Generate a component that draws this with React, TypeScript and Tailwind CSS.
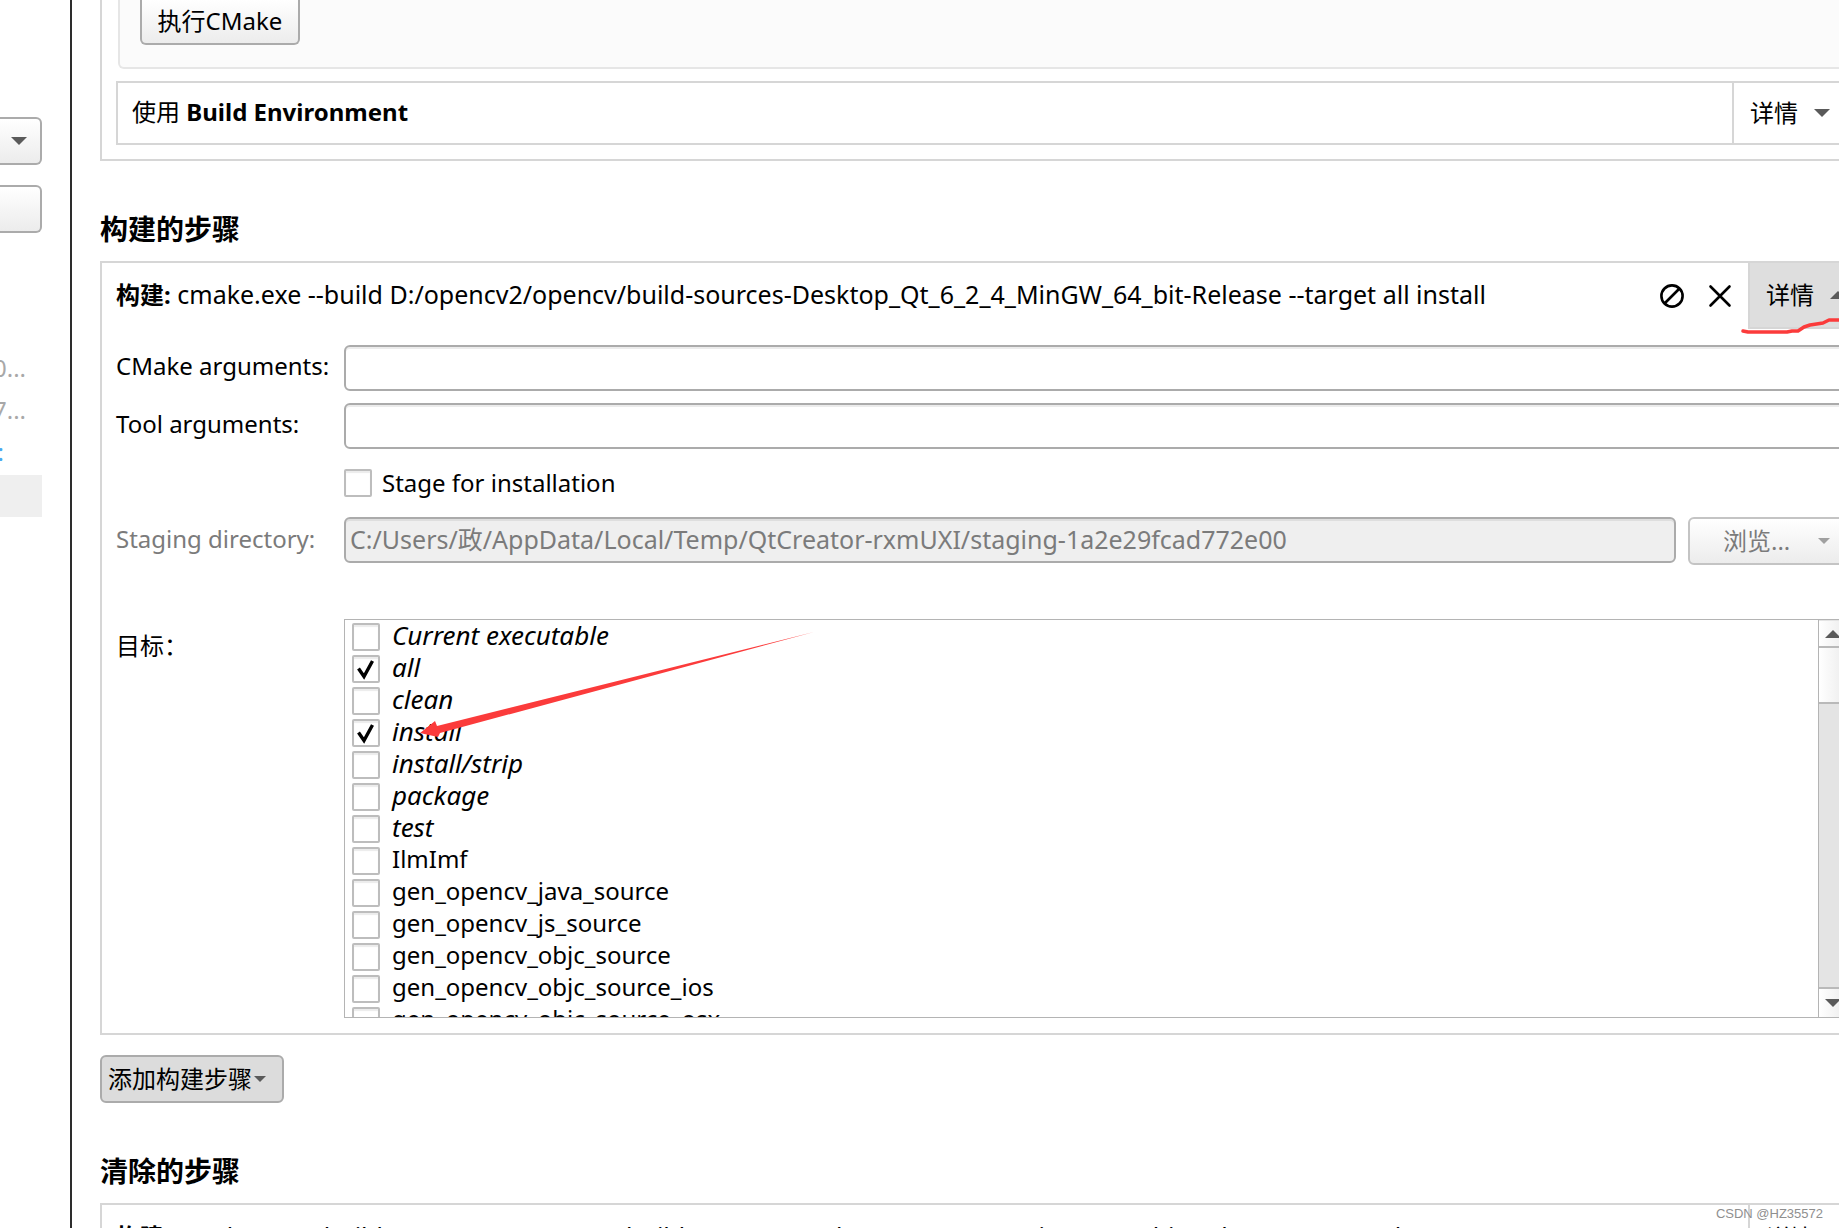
import React, { useState } from 'react';

const COMMAND = 'cmake.exe --build D:/opencv2/opencv/build-sources-Desktop_Qt_6_2_4_MinGW_64_bit-Release --target';

const targets = [
  { name: 'Current executable', special: true },
  { name: 'all', special: true },
  { name: 'clean', special: true },
  { name: 'install', special: true },
  { name: 'install/strip', special: true },
  { name: 'package', special: true },
  { name: 'test', special: true },
  { name: 'IlmImf', special: false },
  { name: 'gen_opencv_java_source', special: false },
  { name: 'gen_opencv_js_source', special: false },
  { name: 'gen_opencv_objc_source', special: false },
  { name: 'gen_opencv_objc_source_ios', special: false },
  { name: 'gen_opencv_objc_source_osx', special: false },
];

function Triangle({ className, up }: { className: string; up?: boolean }) {
  return (
    <svg viewBox="0 0 16 8" className={className} fill="currentColor" preserveAspectRatio="none" aria-hidden="true">
      <path d={up ? 'M0 8L8 0L16 8Z' : 'M0 0H16L8 8Z'} />
    </svg>
  );
}

function CheckBox({ id, checked, onChange }: { id: string; checked: boolean; onChange: () => void }) {
  return (
    <span className="grid size-7 shrink-0">
      <input
        id={id}
        type="checkbox"
        checked={checked}
        onChange={onChange}
        className="col-start-1 row-start-1 size-7 appearance-none rounded-xs border-2 border-[#bdbdbd] bg-white shadow-[inset_0_2px_1px_#ececec]"
      />
      {checked && (
        <svg viewBox="0 0 28 28" className="pointer-events-none col-start-1 row-start-1 size-7" fill="none" stroke="#000" strokeWidth="3.4" aria-hidden="true">
          <path d="M6.5 13.5L12 21.5L20.5 6" />
        </svg>
      )}
    </span>
  );
}

function Heading({ children }: { children: React.ReactNode }) {
  return <h2 className="pt-12 pb-3 text-[28px] leading-10 font-bold">{children}</h2>;
}

function DetailsButton({ open }: { open?: boolean }) {
  return (
    <button
      type="button"
      className={
        open
          ? 'flex w-[113px] shrink-0 items-center gap-4 border-b-2 border-l-2 border-[#d6d6d6] bg-[#dedede] pl-4'
          : 'flex w-[113px] shrink-0 items-center gap-4 border-l-2 border-[#d6d6d6] pl-4'
      }
    >
      详情
      <Triangle up={open} className="h-2 w-4 text-[#5a5a5a]" />
    </button>
  );
}

function Sidebar() {
  return (
    <aside className="w-[72px] shrink-0 overflow-hidden border-r-2 border-[#2d2d2d] pt-[117px] pr-7">
      <div className="grid items-center">
        <select
          aria-label="Kit"
          className="col-start-1 row-start-1 h-12 w-full appearance-none rounded-r-md border-2 border-l-0 border-[#ababab] bg-linear-to-b from-white to-[#ececec]"
        />
        <Triangle className="pointer-events-none col-start-1 row-start-1 mr-[15px] h-2 w-4 justify-self-end text-[#5a5a5a]" />
      </div>
      <button
        type="button"
        aria-label="Manage"
        className="mt-5 block h-12 w-full rounded-r-md border-2 border-l-0 border-[#ababab] bg-linear-to-b from-white to-[#ececec]"
      />
      <ul className="mt-[116px] leading-[38px] text-[#a8a8a8]">
        <li className="flex h-[42px] justify-end pr-4">0...</li>
        <li className="flex h-[42px] justify-end pr-4">7...</li>
        <li className="flex h-[42px] justify-end pr-[38px] text-[#4aa8f0]">:</li>
        <li className="h-[42px] bg-[#efefef]" />
      </ul>
    </aside>
  );
}

function ScrollBar() {
  return (
    <div className="flex w-7 shrink-0 flex-col border-l border-[#b4b4b4] bg-[#e4e4e4] pt-px">
      <button type="button" aria-label="Scroll up" className="flex h-[27px] items-center justify-center border-b-2 border-[#b9b9b9] bg-linear-to-r from-white to-[#ececec]">
        <Triangle up className="h-2 w-4 text-[#5a5a5a]" />
      </button>
      <div className="h-14 border-b-2 border-[#b9b9b9] bg-linear-to-r from-white to-[#ececec]" />
      <div className="flex-1" />
      <button type="button" aria-label="Scroll down" className="flex h-[30px] items-center justify-center border-t-2 border-[#b9b9b9] bg-linear-to-r from-white to-[#ececec]">
        <Triangle className="h-2 w-4 text-[#5a5a5a]" />
      </button>
    </div>
  );
}

function App() {
  const [selected, setSelected] = useState<string[]>(['all', 'install']);
  const [stage, setStage] = useState(false);

  const toggle = (name: string) => {
    setSelected(selected.includes(name) ? selected.filter((s) => s !== name) : [...selected, name]);
  };

  return (
    <div className="relative flex h-screen overflow-hidden bg-white font-['Noto_Sans','Noto_Sans_CJK_SC',sans-serif] text-[24px] leading-8 text-black">
      <Sidebar />

      <main className="-mr-6 min-w-0 flex-1 pl-7">
        {/* cmake configuration */}
        <section className="border-2 border-t-0 border-[#d6d6d6] px-3.5 pb-3.5">
          <div className="ml-0.5 rounded-b-md border-2 border-t-0 border-[#e6e6e6] bg-[#fbfbfb] pb-[22px] pl-5">
            <button type="button" className="block h-[45px] w-40 rounded-b-md border-2 border-t-0 border-[#ababab] bg-linear-to-b from-white to-[#ececec] pb-0.5">
              执行CMake
            </button>
          </div>
          <div className="mt-3 flex h-16 border-2 border-[#d6d6d6]">
            <p className="flex-1 self-center pb-0.5 pl-3.5">
              使用 <b>Build Environment</b>
            </p>
            <DetailsButton />
          </div>
        </section>

        {/* build steps */}
        <Heading>构建的步骤</Heading>
        <section className="border-2 border-[#d6d6d6] pb-[15px]">
          <div className="flex h-[66px] items-stretch">
            <p className="min-w-0 flex-1 self-center pb-1 pl-3.5 text-[25px] whitespace-nowrap">
              <b className="text-[24px]">构建:</b> {COMMAND} all install
            </p>
            <div className="mr-4 flex items-center gap-6">
              <button type="button" aria-label="Disable">
                <svg viewBox="0 0 24 24" className="size-6" fill="none" stroke="#000" strokeWidth="2.6" aria-hidden="true">
                  <circle cx="12" cy="12" r="10.6" />
                  <path d="M4.5 19.5L19.5 4.5" />
                </svg>
              </button>
              <button type="button" aria-label="Remove">
                <svg viewBox="0 0 24 24" className="size-6" fill="none" stroke="#000" strokeWidth="2.6" strokeLinecap="round" aria-hidden="true">
                  <path d="M2.5 2.5L21.5 21.5M21.5 2.5L2.5 21.5" />
                </svg>
              </button>
            </div>
            <DetailsButton open />
          </div>

          <div className="mt-4 grid grid-cols-[228px_minmax(0,1fr)] gap-y-3 pr-3.5 pl-3.5">
            <label htmlFor="cmake-args" className="self-center pb-1">CMake arguments:</label>
            <input id="cmake-args" type="text" className="h-[46px] rounded-md border-2 border-[#ababab] px-1 shadow-[inset_0_2px_0_#ececec]" />

            <label htmlFor="tool-args" className="self-center pb-1">Tool arguments:</label>
            <input id="tool-args" type="text" className="h-[46px] rounded-md border-2 border-[#ababab] px-1 shadow-[inset_0_2px_0_#ececec]" />

            <div className="col-start-2 flex h-11 items-center gap-2.5">
              <CheckBox id="stage" checked={stage} onChange={() => setStage(!stage)} />
              <label htmlFor="stage">Stage for installation</label>
            </div>

            <label htmlFor="staging-dir" className="self-center pb-1 text-[#7b7b7b]">Staging directory:</label>
            <div className="flex items-start gap-3">
              <input
                id="staging-dir"
                type="text"
                disabled
                defaultValue="C:/Users/政/AppData/Local/Temp/QtCreator-rxmUXI/staging-1a2e29fcad772e00"
                className="h-[46px] min-w-0 flex-1 rounded-md border-2 border-[#ababab] bg-[#efefef] px-1 pb-1 text-[25px] text-[#7b7b7b] shadow-[inset_0_2px_0_#dedede]"
              />
              <button type="button" disabled className="flex h-12 w-[159px] items-center gap-7 rounded-md border-2 border-[#c4c4c4] bg-linear-to-b from-white to-[#ececec] pl-[33px] text-[#7b7b7b]">
                浏览...
                <Triangle className="h-1.5 w-3 text-[#a0a0a0]" />
              </button>
            </div>

            <span id="targets-label" className="mt-[53px]">目标：</span>
            <div className="mt-[42px] flex h-[399px] border border-[#b4b4b4]">
              <ul aria-labelledby="targets-label" className="min-w-0 flex-1 overflow-hidden pt-px pl-[7px]">
                {targets.map((t) => (
                  <li key={t.name} className="flex h-8 items-center gap-3">
                    <CheckBox id={t.name} checked={selected.includes(t.name)} onChange={() => toggle(t.name)} />
                    <label htmlFor={t.name} className={t.special ? 'pb-1 text-[26px] italic' : 'pb-1'}>{t.name}</label>
                  </li>
                ))}
              </ul>
              <ScrollBar />
            </div>
          </div>
        </section>
        <button type="button" className="mt-5 flex h-12 w-[184px] items-center gap-0.5 rounded-md border-2 border-[#ababab] bg-[#dcdcdc] pl-1.5">
          添加构建步骤
          <Triangle className="h-1.5 w-3 text-[#5a5a5a]" />
        </button>

        {/* clean steps */}
        <Heading>清除的步骤</Heading>
        <section className="border-2 border-[#d6d6d6]">
          <div className="flex h-[66px]">
            <p className="min-w-0 flex-1 self-center pb-1 pl-3.5 text-[25px] whitespace-nowrap">
              <b className="text-[24px]">构建:</b> {COMMAND} clean
            </p>
            <DetailsButton />
          </div>
        </section>
      </main>

      {/* hand drawn marks */}
      <svg className="pointer-events-none absolute top-[630px] left-[420px] h-[110px] w-[400px]" viewBox="0 0 400 110" fill="#fb3b3b" aria-hidden="true">
        <path d="M394 2L17 96L15 91L0 103L18 107L20 103Z" />
      </svg>
      <svg className="pointer-events-none absolute top-[315px] right-0 h-5 w-[100px]" viewBox="0 0 100 20" fill="none" stroke="#fb3b3b" strokeWidth="3.5" strokeLinecap="round" strokeLinejoin="round" aria-hidden="true">
        <path d="M4 16L9 17H48L53 16H59L65 12L71 10L84 8L90 5H101" />
      </svg>
      <span className="absolute right-4 bottom-1.5 font-['Liberation_Sans',sans-serif] text-[13px] leading-4 text-[#8f8f8f]">CSDN @HZ35572</span>
    </div>
  );
}

export default App;
